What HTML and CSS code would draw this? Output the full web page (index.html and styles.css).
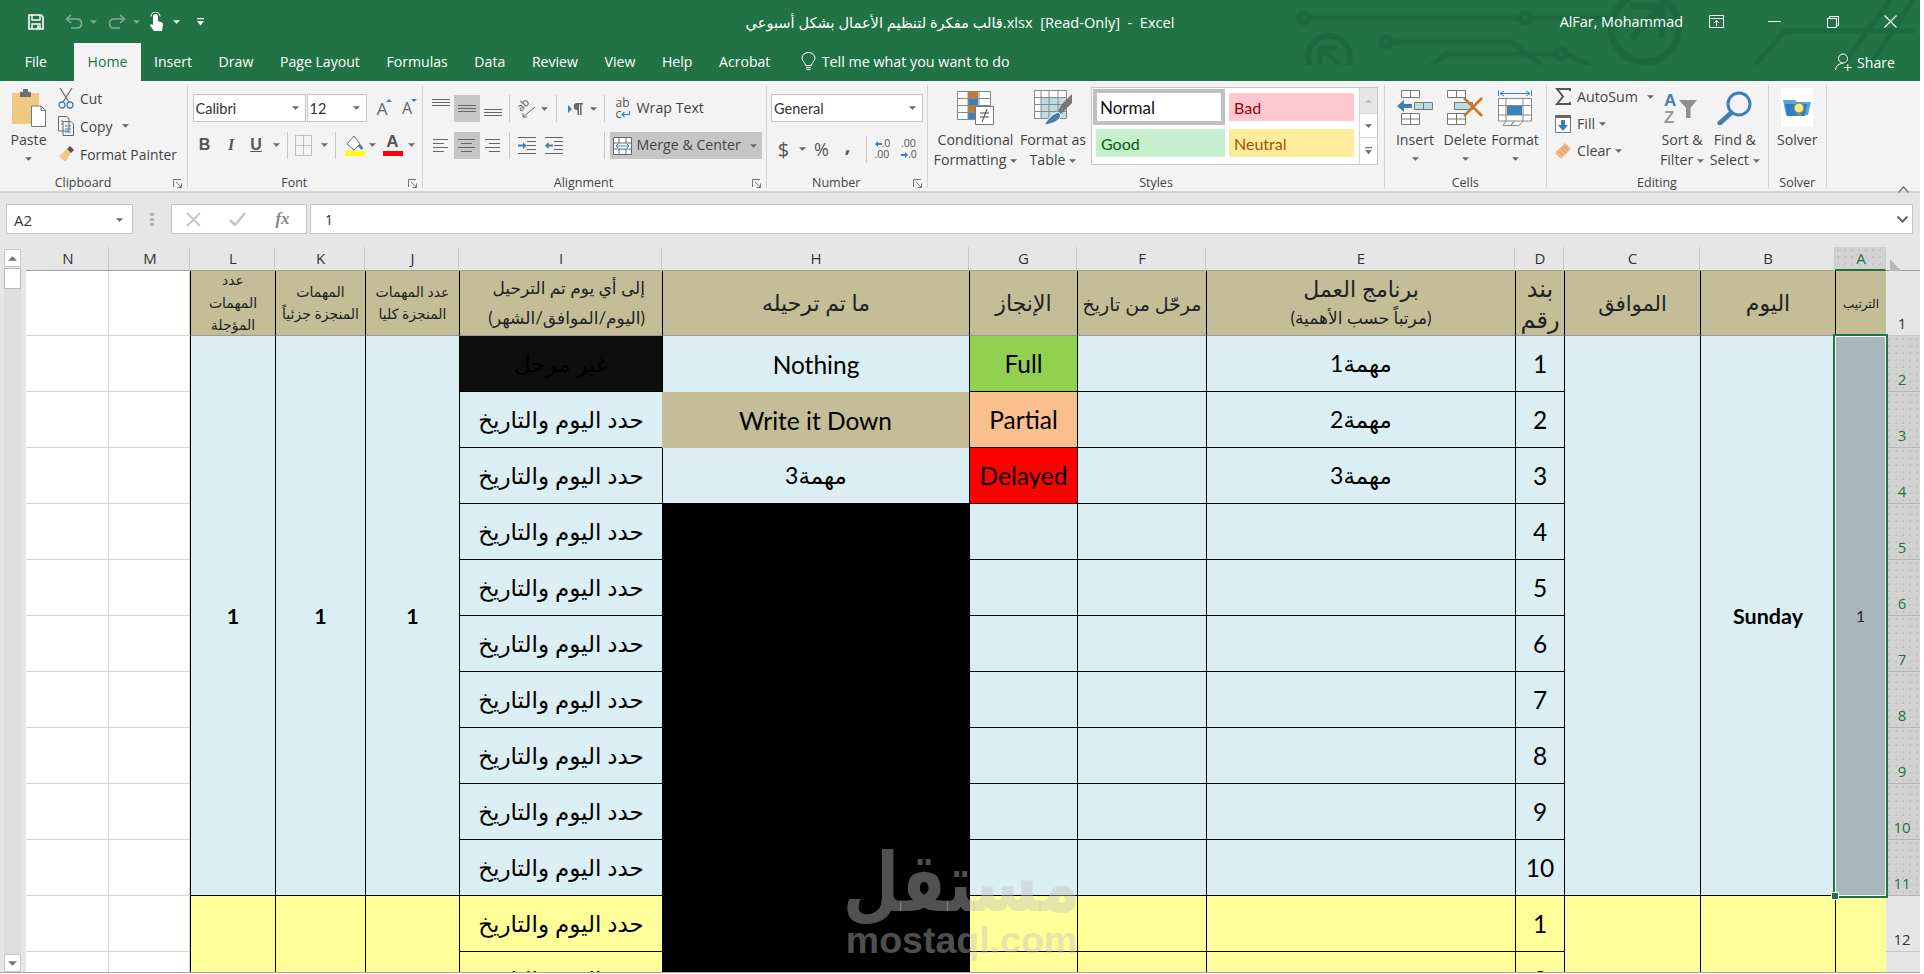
FILE: index.html
```html
<!DOCTYPE html>
<html lang="en">
<head>
<meta charset="utf-8">
<title>Excel</title>
<link rel="stylesheet" href="styles.css">
</head>
<body>
<div class="app">
  <div class="greenbar">
    <svg class="circuit" width="640" height="65" viewBox="1280 0 640 65" fill="none" stroke="#1d6940" stroke-width="5">
      <path d="M1308 18H1521M1529 18H1610"/><circle cx="1304" cy="18" r="5"/><circle cx="1525" cy="18" r="5"/>
      <circle cx="1329" cy="57" r="21" stroke-width="6"/><path d="M1320 65V48H1337M1321 49L1340 65" stroke-width="5"/>
      <circle cx="1386" cy="42" r="5"/><path d="M1391 42H1512L1541 65"/>
      <path d="M1431 65L1447 54H1557M1566 54L1590 65"/><circle cx="1561" cy="54" r="5"/>
      <circle cx="1645" cy="28" r="34" stroke-width="7"/><path d="M1630 6H1662V38M1662 6L1632 38" stroke-width="7"/>
      <path d="M1755 65L1785 31H1915M1843 65L1890 0M1870 65L1913 0"/>
    </svg>
    <div class="titlerow">
      <div class="qat">
        <svg width="16" height="16" viewBox="0 0 16 16" fill="none" stroke="#fff" stroke-width="1.6"><path d="M1 1H13L15 3V15H1Z"/><path d="M4 1V6H12V1M4 15V10H12V15" stroke-width="1.4"/><path d="M9 11.5H11V15H9Z" fill="#fff" stroke="none"/></svg>
        <svg class="qgap1" width="18" height="16" viewBox="0 0 18 16" fill="none" stroke="#7fae95" stroke-width="1.6"><path d="M6 1L1.5 5 6 9M2 5H12Q16.500 5 16.500 9.500T12 14H6"/></svg>
        <svg class="caretdim" width="7" height="4" viewBox="0 0 8 4"><path d="M0 0h8L4 4z"/></svg>
        <svg class="qgap2" width="18" height="16" viewBox="0 0 18 16" fill="none" stroke="#7fae95" stroke-width="1.6"><path d="M12 1L16.500 5 12 9M16 5H6Q1.500 5 1.500 9.500T6 14H12"/></svg>
        <svg class="caretdim" width="7" height="4" viewBox="0 0 8 4"><path d="M0 0h8L4 4z"/></svg>
        <svg class="qgap3" width="15" height="20" viewBox="0 0 15 20" fill="#fff"><path d="M4 4.500A2.500 2.500 0 0 1 9 4.500V9L13 10.500Q14 11 14 12.500L13 19H5L1 13.500 2 12 4 13Z"/><path d="M2 4.500A4.500 4.500 0 0 1 11 4.500" fill="none" stroke="#fff"/></svg>
        <svg class="caretw qgap4" width="7" height="4" viewBox="0 0 8 4"><path d="M0 0h8L4 4z"/></svg>
        <svg class="qgap5" width="7" height="8" viewBox="0 0 7 8" fill="#fff"><path d="M0 0H7V1.200H0ZM0 3H7L3.500 7.500Z"/></svg>
      </div>
      <div class="doctitle">قالب مفكرة لتنظيم الأعمال بشكل أسبوعي.xlsx  [Read-Only]  -  Excel</div>
      <div class="winctl">
        <span class="username">AlFar, Mohammad</span>
        <svg width="15" height="13" viewBox="0 0 15 13" fill="none" stroke="#fff"><path d="M.5.500H14.500V12.500H.5ZM.5 3.500H14.500M7.500 11V5.500M5 8L7.500 5.500 10 8"/></svg>
        <svg class="wmin" width="13" height="1" viewBox="0 0 13 1"><path d="M0 0H13V1H0Z" fill="#fff"/></svg>
        <svg class="wmax" width="12" height="12" viewBox="0 0 12 12" fill="none" stroke="#fff"><path d="M.5 2.500H9.500V11.500H.5ZM2.500 2.500V.5H11.500V9.500H9.500"/></svg>
        <svg class="wclose" width="13" height="13" viewBox="0 0 13 13" fill="none" stroke="#fff" stroke-width="1.100"><path d="M.5.500L12.500 12.500M12.500.500L.5 12.500"/></svg>
      </div>
    </div>
    <div class="tabrow">
      <span class="tab tab-file">File</span>
      <span class="tab active">Home</span>
      <span class="tab">Insert</span>
      <span class="tab">Draw</span>
      <span class="tab">Page Layout</span>
      <span class="tab">Formulas</span>
      <span class="tab">Data</span>
      <span class="tab">Review</span>
      <span class="tab">View</span>
      <span class="tab">Help</span>
      <span class="tab">Acrobat</span>
      <span class="tell">
        <svg width="15" height="19" viewBox="0 0 15 19" fill="none" stroke="#fff"><path d="M4.500 13.500C4.500 10.500 1 9.500 1 6A6.500 5.500 0 0 1 14 6C14 9.500 10.500 10.500 10.500 13.500ZM5 15.500H10M5.500 17.500H9.500"/></svg>
        Tell me what you want to do
      </span>
      <span class="share">
        <svg width="17" height="18" viewBox="0 0 17 18" fill="none" stroke="#fff"><circle cx="8" cy="5.500" r="4.500"/><path d="M.5 17C1 12.500 4 10.500 8 10.500M9 14.500H16.500M12.800 11V18"/></svg>
        Share
      </span>
    </div>
  </div>

  <div class="ribbon">
    <section class="group g-clip">
      <div class="gbody clipbody">
        <div class="big pastecol">
          <div class="bigicon">
            <svg width="34" height="39" viewBox="0 0 34 39"><path d="M0 5H27V36H0Z" fill="#efc981"/><path d="M8 4H11V1H16V4H19V9H8Z" fill="#6f6f6f"/><path d="M19.500 18H29L33.500 22.500V38.500H19.500Z" fill="#fff" stroke="#777"/><path d="M29 18V22.500H33.500" fill="none" stroke="#777"/></svg>
          </div>
          <span class="biglabel">Paste</span>
          <svg class="caret capgap" width="7" height="4" viewBox="0 0 8 4"><path d="M0 0h8L4 4z"/></svg>
        </div>
        <div class="cliprows">
          <div class="sm"><svg width="16" height="22" viewBox="0 0 16 22" fill="none" stroke="#6d6d6d" stroke-width="1.300"><path d="M2 1L11 15M14 1L5 15"/><circle cx="4" cy="18" r="3" stroke="#3f7fb6"/><circle cx="12" cy="18" r="3" stroke="#3f7fb6"/></svg><span>Cut</span></div>
          <div class="sm"><svg width="16" height="20" viewBox="0 0 16 20" fill="none" stroke="#666"><path d="M.5.500H9L11 3V15H.5ZM5 5.500H13L15.500 8V19.500H5Z" fill="#f3f3f3"/><path d="M3 5H5M3 8H5M7 10H13M7 13H13M7 16H13" stroke="#3f7fb6"/></svg><span>Copy</span><svg class="caret capl" width="7" height="4" viewBox="0 0 8 4"><path d="M0 0h8L4 4z"/></svg></div>
          <div class="sm"><svg width="16" height="16" viewBox="0 0 16 16"><path d="M9 3L13 7 8 15H6L1 10Z" fill="#efc981"/><path d="M9 3L12 0 16 4 13 7Z" fill="#555"/></svg><span>Format Painter</span></div>
        </div>
      </div>
      <div class="glabel haslaunch">Clipboard<svg class="launch" width="9" height="9" viewBox="0 0 9 9" fill="none" stroke="#777"><path d="M.5 8V.5H8M3 3L8.500 8.500M8.500 4.500V8.500H4.500"/></svg></div>
    </section>

    <section class="group g-font">
      <div class="gbody stack">
        <div class="fontrow1">
          <div class="combo"><span>Calibri</span><svg class="caret" width="7" height="4" viewBox="0 0 8 4"><path d="M0 0h8L4 4z"/></svg></div>
          <div class="combo"><span>12</span><svg class="caret" width="7" height="4" viewBox="0 0 8 4"><path d="M0 0h8L4 4z"/></svg></div>
          <span class="growa">A<svg class="tick" width="6" height="3" viewBox="0 0 6 3"><path d="M0 3L3 0 6 3Z" fill="#3f7fb6"/></svg></span>
          <span class="growa small">A<svg class="tick" width="6" height="3" viewBox="0 0 6 3"><path d="M0 0H6L3 3Z" fill="#3f7fb6"/></svg></span>
        </div>
        <div class="fontrow2">
          <span class="fmt fb">B</span><span class="fmt fi">I</span><span class="fmt fu">U</span>
          <span class="cell-c"><svg class="caret" width="7" height="4" viewBox="0 0 8 4"><path d="M0 0h8L4 4z"/></svg></span>
          <span class="sep"></span>
          <span class="cell-c"><svg width="17" height="21" viewBox="0 0 17 21" fill="none" stroke="#8a8a8a" stroke-dasharray="1 1"><path d="M.5.500H16.500V20.500H.5ZM8.500.500V20.500M.5 10.500H16.500"/></svg></span>
          <span class="cell-c"><svg class="caret" width="7" height="4" viewBox="0 0 8 4"><path d="M0 0h8L4 4z"/></svg></span>
          <span class="sep"></span>
          <span class="cell-c"><svg width="20" height="21" viewBox="0 0 20 21"><path d="M9 1L15 9 9 15 2 9Z" fill="#fff" stroke="#666"/><path d="M15 9C17 11 18 12 18 13A1.500 1.500 0 0 1 15 13L13 11Z" fill="#3f7fb6"/><path d="M0 16H20V21H0Z" fill="#ff0"/></svg></span>
          <span class="cell-c"><svg class="caret" width="7" height="4" viewBox="0 0 8 4"><path d="M0 0h8L4 4z"/></svg></span>
          <span class="cell-c colora">A<i class="redbar"></i></span>
          <span class="cell-c"><svg class="caret" width="7" height="4" viewBox="0 0 8 4"><path d="M0 0h8L4 4z"/></svg></span>
        </div>
      </div>
      <div class="glabel haslaunch">Font<svg class="launch" width="9" height="9" viewBox="0 0 9 9" fill="none" stroke="#777"><path d="M.5 8V.5H8M3 3L8.500 8.500M8.500 4.500V8.500H4.500"/></svg></div>
    </section>

    <section class="group g-align">
      <div class="gbody stack alignbody">
        <div class="alrow1">
          <span class="cell-c"><svg width="18" height="27" viewBox="0 0 18 27" stroke="#666"><path d="M0 4.500H18M0 7.500H18M0 10.500H18"/></svg></span>
          <span class="cell-c on"><svg width="18" height="27" viewBox="0 0 18 27" stroke="#666"><path d="M0 10.500H18M0 13.500H18M0 16.500H18"/></svg></span>
          <span class="cell-c"><svg width="18" height="27" viewBox="0 0 18 27" stroke="#666"><path d="M0 14.500H18M0 17.500H18M0 20.500H18"/></svg></span>
          <span class="sep"></span>
          <span class="cell-c"><svg width="18" height="18" viewBox="0 0 18 18" fill="none" stroke="#666"><text x="0" y="0" class="orient" transform="translate(3 12) rotate(-45)">ab</text><path d="M17 7L5 17M5 13V17H9"/></svg></span>
          <span class="cell-c"><svg class="caret" width="7" height="4" viewBox="0 0 8 4"><path d="M0 0h8L4 4z"/></svg></span>
          <span class="sep"></span>
          <span class="cell-c"><svg width="15" height="12" viewBox="0 0 15 12"><path d="M0 2V10L4 6Z" fill="#3f7fb6"/><path d="M9 0H15V1.500H13.500V12H12V1.500H11V12H9.500V7A3.500 3.500 0 0 1 9 0Z" fill="#666"/></svg></span>
          <span class="cell-c"><svg class="caret" width="7" height="4" viewBox="0 0 8 4"><path d="M0 0h8L4 4z"/></svg></span>
          <span class="sep"></span>
          <span class="wrapbtn"><span class="abc">ab<br>c<svg width="9" height="7" viewBox="0 0 9 7" fill="none" stroke="#3f7fb6" stroke-width="1.200"><path d="M8.500 0V3.500H1M3.500 1L1 3.500 3.500 6"/></svg></span><span>Wrap Text</span></span>
        </div>
        <div class="alrow2">
          <span class="cell-c"><svg width="15" height="13" viewBox="0 0 15 13" stroke="#666"><path d="M0 .5H15M0 4.500H11M0 8.500H15M0 12.500H11"/></svg></span>
          <span class="cell-c on"><svg width="17" height="13" viewBox="0 0 17 13" stroke="#666"><path d="M0 .5H17M3 4.500H14M0 8.500H17M3 12.500H14"/></svg></span>
          <span class="cell-c"><svg width="15" height="13" viewBox="0 0 15 13" stroke="#666"><path d="M0 .5H15M4 4.500H15M0 8.500H15M4 12.500H15"/></svg></span>
          <span class="sep"></span>
          <span class="cell-c"><svg width="18" height="18" viewBox="0 0 18 18"><path d="M0 .5H18M9 4.500H18M9 8.500H18M9 12.500H18M0 16.500H18" stroke="#666"/><path d="M0 7.500H5V5L8.500 8.500 5 12V9.500H0Z" fill="#3f7fb6"/></svg></span>
          <span class="cell-c"><svg width="18" height="18" viewBox="0 0 18 18"><path d="M0 .5H18M9 4.500H18M9 8.500H18M9 12.500H18M0 16.500H18" stroke="#666"/><path d="M8 7.500H3.500V5L0 8.500 3.500 12V9.500H8Z" fill="#3f7fb6"/></svg></span>
          <span></span>
          <span class="sep"></span>
          <span class="mergebtn"><svg width="19" height="18" viewBox="0 0 19 18" fill="#fff" stroke="#666"><path d="M.5.500H18.500V17.500H.5ZM.5 6H18.500M.5 12H18.500M6 .5V6M13 .5V6M6 12V17.500M13 12V17.500"/><path d="M3 9H16M5 7L3 9 5 11M14 7L16 9 14 11" fill="none" stroke="#3f7fb6"/></svg><span>Merge &amp; Center</span><svg class="caret mergecaret" width="7" height="4" viewBox="0 0 8 4"><path d="M0 0h8L4 4z"/></svg></span>
        </div>
      </div>
      <div class="glabel haslaunch">Alignment<svg class="launch" width="9" height="9" viewBox="0 0 9 9" fill="none" stroke="#777"><path d="M.5 8V.5H8M3 3L8.500 8.500M8.500 4.500V8.500H4.500"/></svg></div>
    </section>

    <section class="group g-num">
      <div class="gbody stack numbody">
        <div class="combo numcombo"><span>General</span><svg class="caret" width="7" height="4" viewBox="0 0 8 4"><path d="M0 0h8L4 4z"/></svg></div>
        <div class="numrow">
          <span class="cell-c dollar">$</span>
          <span class="cell-c"><svg class="caret" width="7" height="4" viewBox="0 0 8 4"><path d="M0 0h8L4 4z"/></svg></span>
          <span class="cell-c pct">%</span>
          <span class="cell-c comma">,</span>
          <span class="sep"></span>
          <span class="cell-c decs"><span><svg width="7" height="6" viewBox="0 0 7 6"><path d="M3 0V2H7V4H3V6L0 3Z" fill="#3f7fb6"/></svg>.0<br>.00</span></span>
          <span class="cell-c decs"><span>.00<br><svg width="7" height="6" viewBox="0 0 7 6"><path d="M4 0V2H0V4H4V6L7 3Z" fill="#3f7fb6"/></svg>.0</span></span>
        </div>
      </div>
      <div class="glabel haslaunch">Number<svg class="launch" width="9" height="9" viewBox="0 0 9 9" fill="none" stroke="#777"><path d="M.5 8V.5H8M3 3L8.500 8.500M8.500 4.500V8.500H4.500"/></svg></div>
    </section>

    <section class="group g-styles">
      <div class="gbody stylesbody">
        <div class="big cfcol">
          <div class="bigicon">
            <svg width="37" height="34" viewBox="0 0 37 34"><path d="M.5.500H33.500V28.500H.5Z" fill="#fff" stroke="#888"/><path d="M11 1H21V7.500H11Z" fill="#c17a32"/><path d="M11 8H21V14.500H11Z" fill="#3f7fb6"/><path d="M11 15H21V21.500H11Z" fill="#c17a32"/><path d="M11 22H21V28H11Z" fill="#3f7fb6"/><path d="M.5 7.500H33.500M.5 14.500H33.500M.5 21.500H33.500M11 .5V28.500M22 .5V28.500" stroke="#888" fill="none"/><path d="M18.500 15.500H36.500V33.500H18.500Z" fill="#fff" stroke="#777"/><path d="M23 22H32M23 26H32M25 31L30 18" stroke="#444" fill="none"/></svg>
          </div>
          <span class="biglabel">Conditional</span>
          <span class="biglabel">Formatting<svg class="caret capl2" width="7" height="4" viewBox="0 0 8 4"><path d="M0 0h8L4 4z"/></svg></span>
        </div>
        <div class="big ftcol">
          <div class="bigicon">
            <svg width="38" height="35" viewBox="0 0 38 35"><path d="M.5.500H32.500V28.500H.5Z" fill="#fff" stroke="#888"/><path d="M7 8H32V28H7Z" fill="#bcdce5"/><path d="M.5 7.500H32.500M.5 14.500H32.500M.5 21.500H32.500M7 .5V28.500M15 .5V28.500M24 .5V28.500" stroke="#888" fill="none"/><path d="M28 14L38 4V13L27 24 24 21Z" fill="#777"/><path d="M24 22L27 25C26 30 20 34 10 35 13 31 15 26 24 22Z" fill="#3f7fb6" stroke="#fff"/></svg>
          </div>
          <span class="biglabel">Format as</span>
          <span class="biglabel">Table<svg class="caret capl2" width="7" height="4" viewBox="0 0 8 4"><path d="M0 0h8L4 4z"/></svg></span>
        </div>
        <div class="gallery">
          <div class="swatches">
            <div class="swatch s-normal">Normal</div>
            <div class="swatch s-bad">Bad</div>
            <div class="swatch s-good">Good</div>
            <div class="swatch s-neutral">Neutral</div>
          </div>
          <div class="galscroll">
            <span class="gs gs-up"><svg width="7" height="4" viewBox="0 0 8 4"><path d="M0 4h8L4 0z" fill="#bbb"/></svg></span>
            <span class="gs"><svg class="caret" width="7" height="4" viewBox="0 0 8 4"><path d="M0 0h8L4 4z"/></svg></span>
            <span class="gs"><svg width="7" height="8" viewBox="0 0 7 8" fill="#777"><path d="M0 0H7V1.200H0ZM0 3H7L3.500 7.500Z"/></svg></span>
          </div>
        </div>
      </div>
      <div class="glabel">Styles</div>
    </section>

    <section class="group g-cells">
      <div class="gbody cellsbody">
        <div class="big">
          <div class="bigicon">
            <svg width="36" height="35" viewBox="0 0 36 35"><path d="M4.500.500H22.500V7.500H4.500ZM13.500.500V7.500M4.500 23.500H22.500V34.500H4.500ZM4.500 29H22.500M13.500 23.500V34.500" fill="#fff" stroke="#777"/><path d="M17.500 12.500H35.500V19.500H17.500ZM26.500 12.500V19.500" fill="#bcdce5" stroke="#777"/><path d="M0 16L7 10V14H15V18H7V22Z" fill="#3f7fb6"/></svg>
          </div>
          <span class="biglabel">Insert</span>
          <svg class="caret capgap" width="7" height="4" viewBox="0 0 8 4"><path d="M0 0h8L4 4z"/></svg>
        </div>
        <div class="big">
          <div class="bigicon">
            <svg width="36" height="35" viewBox="0 0 36 35"><path d="M.5.500H18.500V7.500H.5ZM9.500.500V7.500M.5 23.500H18.500V34.500H.5ZM.5 29H18.500M9.500 23.500V34.500" fill="#fff" stroke="#777"/><path d="M7.500 12.500H25.500V19.500H7.500Z" fill="#bcdce5" stroke="#777"/><path d="M17 8L35 26M35 8L17 26" stroke="#c8762c" stroke-width="2.500" fill="none"/></svg>
          </div>
          <span class="biglabel">Delete</span>
          <svg class="caret capgap" width="7" height="4" viewBox="0 0 8 4"><path d="M0 0h8L4 4z"/></svg>
        </div>
        <div class="big">
          <div class="bigicon">
            <svg width="34" height="36" viewBox="0 0 34 36"><path d="M.5.500V6M33.500.500V6M2 3.500H32M2 3.500L6 1M2 3.500L6 6M32 3.500L28 1M32 3.500L28 6" stroke="#3f7fb6" fill="none"/><path d="M.5 8.500H33.500V31H.5ZM.5 15.500H33.500M.5 25H33.500M8 8.500V31M25 8.500V31M8 31L5 35.500H13L16 31M16 31L13 35.500H21L25 31" stroke="#888" fill="#fff"/><path d="M9 16H24V25H9Z" fill="#3f7fb6"/></svg>
          </div>
          <span class="biglabel">Format</span>
          <svg class="caret capgap" width="7" height="4" viewBox="0 0 8 4"><path d="M0 0h8L4 4z"/></svg>
        </div>
      </div>
      <div class="glabel">Cells</div>
    </section>

    <section class="group g-edit">
      <div class="gbody editbody">
        <div class="editrows">
          <div class="sm"><svg width="16" height="17" viewBox="0 0 16 17" fill="none" stroke="#555" stroke-width="2"><path d="M15 3V1H2L8 8.500 2 16H15V14"/></svg><span>AutoSum</span><svg class="caret capl3" width="7" height="4" viewBox="0 0 8 4"><path d="M0 0h8L4 4z"/></svg></div>
          <div class="sm"><svg width="16" height="18" viewBox="0 0 16 18"><path d="M.5.500H15.500V17.500H.5Z" fill="#fff" stroke="#777"/><path d="M.5 0H15.500V3H.5Z" fill="#666"/><path d="M6 5H10V10H13L8 16 3 10H6Z" fill="#3f7fb6"/></svg><span>Fill</span><svg class="caret capl4" width="7" height="4" viewBox="0 0 8 4"><path d="M0 0h8L4 4z"/></svg></div>
          <div class="sm"><svg width="16" height="16" viewBox="0 0 16 16"><path d="M10 0L16 6 6 16 0 10Z" fill="#f2b489"/><path d="M3 8L8 13M6 5L11 10M9 3L13 7" stroke="#e08f58" fill="none"/></svg><span>Clear</span><svg class="caret capl4" width="7" height="4" viewBox="0 0 8 4"><path d="M0 0h8L4 4z"/></svg></div>
        </div>
        <div class="big sortcol">
          <div class="bigicon">
            <svg width="36" height="33" viewBox="0 0 36 33"><text x="0" y="15" class="azA">A</text><text x="0" y="32" class="azZ">Z</text><path d="M15 9H33L26.500 17V27H22V17Z" fill="#8f8f8f"/></svg>
          </div>
          <span class="biglabel">Sort &amp;</span>
          <span class="biglabel">Filter<svg class="caret capl2" width="7" height="4" viewBox="0 0 8 4"><path d="M0 0h8L4 4z"/></svg></span>
        </div>
        <div class="big findcol">
          <div class="bigicon">
            <svg width="35" height="34" viewBox="0 0 35 34" fill="none" stroke="#3f7fb6"><circle cx="22" cy="13" r="11" stroke-width="3"/><path d="M14 22L3 32" stroke-width="5" stroke-linecap="round"/></svg>
          </div>
          <span class="biglabel">Find &amp;</span>
          <span class="biglabel">Select<svg class="caret capl2" width="7" height="4" viewBox="0 0 8 4"><path d="M0 0h8L4 4z"/></svg></span>
        </div>
      </div>
      <div class="glabel">Editing</div>
    </section>

    <section class="group g-solver">
      <div class="gbody">
        <div class="big solvercol">
          <div class="bigicon">
            <svg width="32" height="39" viewBox="0 0 32 39"><path d="M0 0H32V39H0Z" fill="#fff"/><path d="M2 12H14L16 14H30L27 27H5Z" fill="#5ba4dc"/><path d="M4 16H26L24 28H6Z" fill="#2f7fc6"/><circle cx="18" cy="20" r="5" fill="#f6e58d" stroke="#8a7a2a"/><path d="M16 25H20V28H16Z" fill="#888"/></svg>
          </div>
          <span class="biglabel">Solver</span>
        </div>
      </div>
      <div class="glabel">Solver</div>
    </section>

    <div class="collapse"><svg width="11" height="7" viewBox="0 0 11 7" fill="none" stroke="#777" stroke-width="1.500"><path d="M.5 6.500L5.500 1 10.500 6.500"/></svg></div>
  </div>

  <div class="formulabar">
    <div class="namebox"><span>A2</span><svg class="caret" width="7" height="4" viewBox="0 0 8 4"><path d="M0 0h8L4 4z"/></svg></div>
    <div class="grip"><i></i><i></i><i></i></div>
    <div class="fxbtns">
      <svg width="15" height="15" viewBox="0 0 15 15" stroke="#c6c6c6" stroke-width="1.800"><path d="M1 1L14 14M14 1L1 14"/></svg>
      <svg width="17" height="14" viewBox="0 0 17 14" fill="none" stroke="#c6c6c6" stroke-width="2.500"><path d="M1 8L6 13 16 1"/></svg>
      <span class="fx">fx</span>
    </div>
    <div class="fxinput"><span>1</span><svg width="11" height="7" viewBox="0 0 11 7" fill="none" stroke="#666" stroke-width="2"><path d="M.5.500L5.500 5.500 10.500.5"/></svg></div>
  </div>

  <div class="sheet">
    <div class="vscroll">
      <span class="sbtn"><svg width="9" height="5" viewBox="0 0 8 4"><path d="M0 4h8L4 0z" fill="#6a7a72"/></svg></span>
      <span class="sthumb"></span>
      <span class="strack"></span>
      <span class="sbtn"><svg width="9" height="5" viewBox="0 0 8 4"><path d="M0 0h8L4 4z" fill="#6a7a72"/></svg></span>
    </div>
    <div class="gridwrap">
      <div class="grid">
        <div class="ch">N</div><div class="ch">M</div><div class="ch">L</div><div class="ch">K</div><div class="ch">J</div><div class="ch">I</div><div class="ch">H</div><div class="ch">G</div><div class="ch">F</div><div class="ch">E</div><div class="ch">D</div><div class="ch">C</div><div class="ch">B</div><div class="ch chsel">A</div>
        <div class="corner"><svg width="15" height="16" viewBox="0 0 15 16"><path d="M0 0L15 16H0Z" fill="#b7b7b7"/></svg></div>

        <div class="blank"></div><div class="blank"></div>
        <div class="hd hsm"><span>عدد<br>المهمات<br>المؤجلة</span></div>
        <div class="hd hsm"><span>المهمات<br>المنجزة جزئياً</span></div>
        <div class="hd hsm"><span>عدد المهمات<br>المنجزة كليا</span></div>
        <div class="hd hmd"><span>إلى أي يوم تم الترحيل<br>(اليوم/الموافق/الشهر)</span></div>
        <div class="hd hlg"><span>ما تم ترحيله</span></div>
        <div class="hd hlg"><span>الإنجاز</span></div>
        <div class="hd hmd2"><span>مرحّل من تاريخ</span></div>
        <div class="hd hlg he"><span>برنامج العمل<br><small>(مرتباً حسب الأهمية)</small></span></div>
        <div class="hd hlg hdd"><span>بند<br>رقم</span></div>
        <div class="hd hlg hcc"><span>الموافق</span></div>
        <div class="hd hlg"><span>اليوم</span></div>
        <div class="hd hxs"><span>الترتيب</span></div>
        <div class="rh">1</div>

        <div class="mg mJ r-blue">1</div><div class="mg mK r-blue">1</div><div class="mg mL r-blue">1</div>
        <div class="mg mC r-blue"></div><div class="mg mB r-blue">Sunday</div>
        <div class="mA"><span>1</span><i class="handle"></i></div>
        <div class="mH"></div>
        <div class="mg mJ2 r-yel"></div><div class="mg mK2 r-yel"></div><div class="mg mL2 r-yel"></div>
        <div class="mg mC2 r-yel"></div><div class="mg mB2 r-yel"></div><div class="mA2 r-yel"></div>

        <div class="blank"></div><div class="blank"></div>
        <div class="c ar r-dark">غير مرحل</div><div class="c r-blue nb">Nothing</div><div class="c r-full">Full</div><div class="c r-blue"></div><div class="c ar r-blue">مهمة1</div><div class="c r-blue">1</div><div class="rh sel">2</div>
        <div class="blank"></div><div class="blank"></div>
        <div class="c ar r-blue">حدد اليوم والتاريخ</div><div class="c r-tan nb">Write it Down</div><div class="c r-part">Partial</div><div class="c r-blue"></div><div class="c ar r-blue">مهمة2</div><div class="c r-blue">2</div><div class="rh sel">3</div>
        <div class="blank"></div><div class="blank"></div>
        <div class="c ar r-blue">حدد اليوم والتاريخ</div><div class="c ar r-blue">مهمة3</div><div class="c r-del">Delayed</div><div class="c r-blue"></div><div class="c ar r-blue">مهمة3</div><div class="c r-blue">3</div><div class="rh sel">4</div>
        <div class="blank"></div><div class="blank"></div>
        <div class="c ar r-blue">حدد اليوم والتاريخ</div><div class="c r-blue"></div><div class="c r-blue"></div><div class="c r-blue"></div><div class="c r-blue">4</div><div class="rh sel">5</div>
        <div class="blank"></div><div class="blank"></div>
        <div class="c ar r-blue">حدد اليوم والتاريخ</div><div class="c r-blue"></div><div class="c r-blue"></div><div class="c r-blue"></div><div class="c r-blue">5</div><div class="rh sel">6</div>
        <div class="blank"></div><div class="blank"></div>
        <div class="c ar r-blue">حدد اليوم والتاريخ</div><div class="c r-blue"></div><div class="c r-blue"></div><div class="c r-blue"></div><div class="c r-blue">6</div><div class="rh sel">7</div>
        <div class="blank"></div><div class="blank"></div>
        <div class="c ar r-blue">حدد اليوم والتاريخ</div><div class="c r-blue"></div><div class="c r-blue"></div><div class="c r-blue"></div><div class="c r-blue">7</div><div class="rh sel">8</div>
        <div class="blank"></div><div class="blank"></div>
        <div class="c ar r-blue">حدد اليوم والتاريخ</div><div class="c r-blue"></div><div class="c r-blue"></div><div class="c r-blue"></div><div class="c r-blue">8</div><div class="rh sel">9</div>
        <div class="blank"></div><div class="blank"></div>
        <div class="c ar r-blue">حدد اليوم والتاريخ</div><div class="c r-blue"></div><div class="c r-blue"></div><div class="c r-blue"></div><div class="c r-blue">9</div><div class="rh sel">10</div>
        <div class="blank"></div><div class="blank"></div>
        <div class="c ar r-blue">حدد اليوم والتاريخ</div><div class="c r-blue"></div><div class="c r-blue"></div><div class="c r-blue"></div><div class="c r-blue">10</div><div class="rh sel">11</div>
        <div class="blank"></div><div class="blank"></div>
        <div class="c ar r-yel">حدد اليوم والتاريخ</div><div class="c r-yel"></div><div class="c r-yel"></div><div class="c r-yel"></div><div class="c r-yel">1</div><div class="rh">12</div>
        <div class="blank"></div><div class="blank"></div>
        <div class="c ar r-yel">حدد اليوم والتاريخ</div><div class="c r-yel"></div><div class="c r-yel"></div><div class="c r-yel"></div><div class="c r-yel">2</div><div class="rh">13</div>
      </div>
      <div class="watermark">
        <span class="wm-ar">مستقل</span>
        <span class="wm-en">mostaql.com</span>
      </div>
    </div>
  </div>
</div>
</body>
</html>
```
FILE: styles.css
```css
* { box-sizing: border-box; }
html, body { margin: 0; padding: 0; background: #fff; }
body { width: 1924px; height: 974px; overflow: hidden; font-family: "Open Sans", "DejaVu Sans", sans-serif; }
.app { width: 1920px; height: 973px; display: flex; flex-direction: column; overflow: hidden; }

/* green bar */
.greenbar { position: relative; height: 81px; background: #217346; color: #fff; flex: none; }
.circuit { position: absolute; right: 0; top: 0; }
.titlerow { position: relative; height: 43px; display: grid; grid-template-columns: 1fr auto 1fr; align-items: center; }
.qat { display: flex; align-items: center; padding-left: 28px; }
.qgap1 { margin-left: 21px; }
.caretdim { fill: #7fae95; margin-left: 7px; }
.qgap2 { margin-left: 11px; }
.qgap3 { margin-left: 9px; }
.caretw { fill: #fff; }
.qgap4 { margin-left: 9px; }
.qgap5 { margin-left: 17px; }
.doctitle { font-size: 14.6px; white-space: pre; }
.winctl { display: flex; align-items: center; justify-content: flex-end; padding-right: 23px; }
.username { font-size: 14.4px; margin-right: 26px; }
.wmin { margin-left: 44px; }
.wmax { margin-left: 46px; }
.wclose { margin-left: 45px; }
.tabrow { position: relative; height: 38px; display: flex; align-items: stretch; padding-left: 11.350px; font-size: 14.100px; }
.tab { padding: 0 13.300px 2px; display: flex; align-items: center; }
.tab-file { margin-right: 14px; }
.tab.active { background: #f3f3f3; color: #217346; }
.tell { display: flex; align-items: center; gap: 6px; margin-left: 17px; padding-bottom: 2px; font-size: 14.300px; }
.share { display: flex; align-items: center; gap: 5px; margin-left: auto; padding-right: 25px; }

/* ribbon */
.ribbon { height: 112px; background: #f3f3f3; border-bottom: 2px solid #d4d4d4; display: flex; flex: none; color: #444; font-size: 14.2px; position: relative; }
.group { margin-top: 4px; height: 103px; border-right: 1px solid #d4d4d4; position: relative; display: flex; flex-direction: column; flex: none; }
.gbody { flex: 1; min-height: 0; display: flex; }
.glabel { height: 0; position: relative; top: -15px; line-height: 20px; font-size: 12.5px; text-align: center; color: #444; }
.haslaunch { padding-right: 21px; }
.launch { position: absolute; right: 5px; top: 6px; }
.g-clip { width: 188px; }
.g-font { width: 234.500px; }
.g-align { width: 344px; }
.g-num { width: 161.500px; }
.g-styles { width: 457px; }
.g-cells { width: 161.500px; }
.g-edit { width: 222px; }
.g-solver { width: 58.500px; }
.solvercol { width: 100%; }
.caret { fill: #666; flex: none; }
.big { display: flex; flex-direction: column; align-items: center; }
.bigicon { height: 45px; display: flex; align-items: center; justify-content: center; flex: none; }
.biglabel { line-height: 20px; white-space: nowrap; height: 20px; }
.capgap { margin-top: 7px; }
.capl { margin-left: 9px; }
.capl2 { margin-left: 4px; vertical-align: middle; }
.capl3 { margin-left: 9px; }
.capl4 { margin-left: 4px; }
.clipbody { padding-left: 0; }
.pastecol { width: 58px; padding-right: 1px; }
.cliprows, .editrows { display: grid; grid-auto-rows: 28px; }
.cliprows { margin-top: -1px; font-size: 13.900px; }
.editrows { grid-auto-rows: 27px; width: 108px; margin-top: -2px; }
.sm { display: flex; align-items: center; white-space: nowrap; }
.sm > svg:first-child { width: 16px; flex: none; margin-right: 6px; }
.stack { flex-direction: column; }
.g-font .stack { padding-top: 9px; }
.fontrow1 { display: flex; align-items: center; height: 28px; padding-left: 4.500px; }
.combo { height: 28px; background: #fff; border: 1px solid #c6c6c6; display: flex; align-items: center; justify-content: space-between; padding: 0 6px 0 2px; font-family: "Lato", sans-serif; font-size: 14.5px; color: #333; margin-right: 1px; }
.fontrow1 .combo:nth-child(1) { width: 113px; }
.fontrow1 .combo:nth-child(2) { width: 60px; }
.growa { width: 25px; text-align: center; font-size: 17px; color: #666; position: relative; margin-left: 2px; }
.growa.small { font-size: 16px; margin-left: 0; }
.tick { position: absolute; right: 3px; top: 2px; }
.fontrow2 { display: grid; grid-template-columns: 25px 28px 22px 18px 4px 29px 12px 11px 27px 8px 33px 4px; height: 28px; margin-top: 9px; padding-left: 4px; align-items: center; }
.fmt { text-align: center; font: 700 16px "Liberation Sans", sans-serif; color: #555; }
.fi { font-style: italic; font-family: "Liberation Serif", serif; }
.fu { text-decoration: underline; }
.cell-c { display: flex; align-items: center; justify-content: center; height: 100%; min-width: 0; }
.colora { flex-direction: column; font: 700 17px/16px "Liberation Sans", sans-serif; color: #555; }
.redbar { width: 20px; height: 5px; background: #f00; display: block; margin-top: 1px; }
.sep { display: block; justify-self: center; width: 1px; height: 27px; background: #c6c6c6; }
.alignbody { padding: 10px 0 0 5px; }
.alrow1, .alrow2 { display: grid; height: 27px; align-items: center; }
.alrow1 { grid-template-columns: 26px 26px 26px 8px 27px 8px 16px 21px 15px 8px 150px; }
.alrow2 { margin-top: 10px; grid-template-columns: 26px 26px 26px 8px 27px 26px 34px 8px 153px; }
.on { background: #c6c6c6; }
.orient { font: 11px "Open Sans", sans-serif; fill: #555; stroke: none; }
.wrapbtn { display: flex; align-items: center; padding: 0 0 2px 7px; gap: 6px; white-space: nowrap; }
.abc { font: 12px/11px "Open Sans", sans-serif; color: #555; width: 15px; }
.mergebtn { display: flex; align-items: center; height: 27px; background: #c6c6c6; padding: 0 0 0 3px; gap: 5px; white-space: nowrap; margin-left: 1px; }
.mergebtn > span { position: relative; top: -1px; }
.mergecaret { margin-left: 4px; }
.numbody { padding: 9px 0 0 4.500px; }
.numcombo { width: 151.500px; font-family: "Lato", sans-serif; }
.numrow { display: grid; grid-template-columns: 25px 13px 25px 27px 10px 23px 30px; height: 28px; margin-top: 9px; align-items: center; }
.dollar { font-size: 20px; color: #555; }
.pct { font-size: 18px; color: #555; }
.comma { font-size: 20px; font-weight: 700; color: #555; padding-bottom: 9px; }
.decs { font: 10.5px/11px "Open Sans", sans-serif; color: #555; white-space: nowrap; }
.stylesbody { padding-left: 8px; }
.cfcol { width: 79px; }
.ftcol { width: 76px; }
.gallery { width: 286.500px; height: 78px; margin-top: 2px; border: 1px solid #c6c6c6; background: #fff; display: flex; }
.swatches { flex: 1; display: grid; grid-template-columns: 131.500px 125px; grid-template-rows: 36px 28px; row-gap: 4px; column-gap: 4.500px; padding: 1px 0 0 1px; align-items: center; }
.swatch { font-family: "Lato", sans-serif; font-size: 16px; display: flex; align-items: center; height: 28px; padding-left: 5px; }
.s-normal { height: 36px; border: 4px solid #bfbfbf; background: #fff; color: #111; padding-left: 3px; font-size: 17px; }
.s-bad { background: #ffc7ce; color: #9c0006; }
.s-good { background: #c6efce; color: #006100; margin-left: 3px; padding-left: 5px; }
.s-neutral { background: #ffeb9c; color: #9c5700; }
.galscroll { width: 18px; display: grid; grid-template-rows: 26px 24px 26px; flex: none; }
.gs { display: flex; align-items: center; justify-content: center; border-left: 1px solid #d4d4d4; border-bottom: 1px solid #d4d4d4; }
.gs:last-child { border-bottom: 0; }
.gs-up { background: #e6e6e6; }
.cellsbody { padding-left: 5px; display: grid; grid-template-columns: 50px 50px 50px; }
.editbody { padding-left: 8.500px; }
.sortcol { width: 40px; }
.findcol { width: 66px; }
.azA { font: 700 17px "Liberation Sans", sans-serif; fill: #3f7fb6; }
.azZ { font: 700 17px "Liberation Sans", sans-serif; fill: #9a9a9a; }
.collapse { position: absolute; right: 11px; top: 97px; }

/* formula bar */
.formulabar { height: 54px; background: #e6e6e6; display: flex; flex: none; padding-top: 11px; align-items: flex-start; }
.namebox { width: 127px; height: 30px; margin-left: 6px; background: #fff; border: 1px solid #c6c6c6; display: flex; align-items: center; justify-content: space-between; padding: 1px 9px 0 7px; font-size: 15px; color: #333; }
.grip { width: 37.500px; height: 30px; display: flex; flex-direction: column; align-items: center; justify-content: center; gap: 2px; }
.grip i { width: 4px; height: 3px; background: #b4b4b4; display: block; }
.fxbtns { width: 136px; height: 30px; background: #fff; border: 1px solid #c6c6c6; display: grid; grid-template-columns: 43px 46px 44px; align-items: center; justify-items: center; }
.fx { font: italic 700 17px "Liberation Serif", serif; color: #888; }
.fxinput { width: 1603px; height: 30px; margin-left: 3.500px; background: #fff; border: 1px solid #c6c6c6; display: flex; align-items: center; justify-content: space-between; padding: 1px 4px 0 14px; font-size: 14px; color: #333; }

/* sheet */
.sheet { flex: 1; min-height: 0; display: flex; background: #e6e6e6; border-bottom: 1px solid #a5a5a5; }
.vscroll { width: 26px; flex: none; display: flex; flex-direction: column; padding: 2px 5px 0 3.500px; }
.sbtn { height: 18px; flex: none; background: #fff; border: 1px solid #c6c6c6; display: flex; align-items: center; justify-content: center; }
.sthumb { height: 21px; margin-top: 1px; flex: none; background: #fff; border: 1px solid #b8b8b8; }
.strack { flex: 1; background: #dedede; }
.gridwrap { flex: 1; min-width: 0; position: relative; overflow: hidden; background: #fff; }
.grid { display: grid; font-family: "Lato", "DejaVu Sans", sans-serif; font-size: 24px; color: #000;
  grid-template-columns: 83px 81px 85px 90px 94px 203px 307px 108px 129px 309px 49px 136px 135px 51px 34px;
  grid-template-rows: 24px 65px repeat(12, 56px); }
.ch { background: #e6e6e6; border-right: 1px solid #c8c8c8; border-bottom: 1px solid #9f9f9f; font: 15px/22px "Open Sans", sans-serif; color: #333; text-align: center; padding-left: 2px; }
.chsel { background: #d2d2d2 radial-gradient(#bdbdbd 1px, transparent 1px) 0 0 / 7px 7px; color: #217346; border-bottom: 2px solid #217346; }
.corner { background: #e6e6e6; padding: 4px 0 0 4px; border-bottom: 1px solid #9f9f9f; }
.blank { background: #fff; border-right: 1px solid #d4d4d4; border-bottom: 1px solid #d4d4d4; }
.hd { background: #c4bd97; border-left: 1px solid #000; border-bottom: 1px solid #999; display: flex; align-items: center; justify-content: center; text-align: center; color: #222; overflow: hidden; white-space: nowrap; }
.hlg { font-size: 22px; line-height: 30px; }
.he small { font-size: 17px; line-height: 28px; display: block; }
.hdd { font-size: 24px; line-height: 31px; }
.hcc { font-size: 21px; }
.hmd { font-size: 17px; line-height: 30px; justify-content: flex-end; text-align: right; padding-right: 17px; }
.hmd2 { font-size: 19px; }
.hsm { font-size: 14px; line-height: 22.500px; }
.hxs { font-size: 12px; }
.c, .mg { display: flex; align-items: center; justify-content: center; text-align: center; border-left: 1px solid #000; border-bottom: 1px solid #000; min-width: 0; white-space: nowrap; }
.c { font-size: 24.500px; line-height: 1; padding-top: 2px; }
.c.ar { font-size: 23px; padding-top: 0; }
.r-blue { background: #daeef3; }
.r-yel { background: #ffff99; }
.r-tan { background: #c4bd97; }
.r-dark { background: #0e0e0e; color: #000; }
.r-full { background: #92d050; }
.r-part { background: #fabf8f; }
.r-del { background: #f00; }
.nb { border-bottom: 0; }
.r-tan.nb { border-left: 0; }
.mg { font-size: 21.500px; font-weight: 700; }
.mL { grid-column: 3; grid-row: 3 / span 10; }
.mK { grid-column: 4; grid-row: 3 / span 10; }
.mJ { grid-column: 5; grid-row: 3 / span 10; }
.mC { grid-column: 12; grid-row: 3 / span 10; }
.mB { grid-column: 13; grid-row: 3 / span 10; }
.mL2 { grid-column: 3; grid-row: 13 / span 2; }
.mK2 { grid-column: 4; grid-row: 13 / span 2; }
.mJ2 { grid-column: 5; grid-row: 13 / span 2; }
.mC2 { grid-column: 12; grid-row: 13 / span 2; }
.mB2 { grid-column: 13; grid-row: 13 / span 2; }
.mA2 { grid-column: 14; grid-row: 13 / span 2; border-left: 1px solid #000; }
.mH { grid-column: 7; grid-row: 6 / span 9; background: #000; }
.mA { grid-column: 14; grid-row: 3 / span 10; background: #a9b6bb; display: flex; align-items: center; justify-content: center; font-size: 15px; color: #222; position: relative; z-index: 2; box-shadow: inset 0 0 0 1px #fff; outline: 2px solid #217346; outline-offset: 0; }
.handle { position: absolute; left: -3px; bottom: -3px; width: 6px; height: 6px; background: #217346; border: 1px solid #fff; box-sizing: content-box; margin: -1px; }
.rh { background: #e6e6e6; border-bottom: 1px solid #c8c8c8; display: flex; align-items: flex-end; justify-content: center; font: 15px/22px "Open Sans", sans-serif; color: #333; padding: 0 2px 1px 0; }
.rh.sel { background: #d2d2d2 radial-gradient(#bdbdbd 1px, transparent 1px) 0 0 / 7px 7px; color: #217346; border-bottom-color: #b5b5b5; }
.watermark { position: absolute; left: 820px; top: 598px; width: 231px; display: flex; flex-direction: column; align-items: center; pointer-events: none; color: rgba(192, 192, 192, .42); z-index: 3; }
.wm-ar { font: 700 65px/72px "DejaVu Sans", sans-serif; height: 72px; white-space: nowrap; transform: translateY(2px) scaleY(1.25); }
.wm-en { font: 700 37.500px/40px "Liberation Sans", sans-serif; white-space: nowrap; margin-top: 3px; }
```
